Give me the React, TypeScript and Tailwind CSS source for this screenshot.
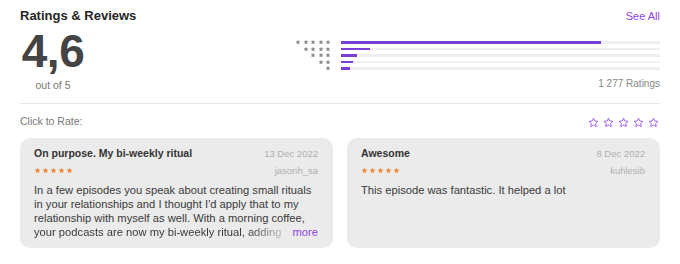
const bars = [
  { stars: 5, pct: 81.5 },
  { stars: 4, pct: 9 },
  { stars: 3, pct: 5 },
  { stars: 2, pct: 3.7 },
  { stars: 1, pct: 2.8 },
]

const reviews = [
  {
    title: 'On purpose. My bi-weekly ritual',
    date: '13 Dec 2022',
    user: 'jasonh_sa',
    lines: [
      'In a few episodes you speak about creating small rituals',
      "in your relationships and I thought I'd apply that to my",
      'relationship with myself as well. With a morning coffee,',
    ],
    last: 'your podcasts are now my bi-weekly ritual, adding',
  },
  {
    title: 'Awesome',
    date: '8 Dec 2022',
    user: 'kuhlesib',
    lines: ['This episode was fantastic. It helped a lot'],
    last: '',
  },
]

function Star({ className }: { className?: string }) {
  return (
    <svg viewBox="0 0 24 24" className={className} fill="currentColor">
      <path d="M12 2.5l2.9 6.2 6.8.8-5 4.7 1.3 6.7L12 17.6l-6 3.3 1.3-6.7-5-4.7 6.8-.8z" />
    </svg>
  )
}

function StarOutline({ className }: { className?: string }) {
  return (
    <svg viewBox="0 0 24 24" className={className} fill="none" stroke="currentColor" strokeWidth="2" strokeLinejoin="round">
      <path d="M12 2.5l2.9 6.2 6.8.8-5 4.7 1.3 6.7L12 17.6l-6 3.3 1.3-6.7-5-4.7 6.8-.8z" />
    </svg>
  )
}

export default function App() {
  return (
    <div className="w-[680px] h-[264px] bg-white px-5 pt-[7px] font-['Liberation_Sans',Arial,sans-serif] overflow-hidden">
      <div className="flex items-center justify-between h-[18px]">
        <h2 className="text-[13px] font-bold text-[#262626]">Ratings &amp; Reviews</h2>
        <span className="text-[11px] text-[#8b45e6] mt-[1px]">See All</span>
      </div>

      <div className="flex h-[79px] border-b border-[#e6e6e6]">
        <div className="w-[66px] flex flex-col items-center">
          <span className="text-[46px] leading-[44px] font-bold text-[#444] tracking-[-0.5px] mt-[4px]">4,6</span>
          <span className="text-[10.5px] text-[#777] mt-[5px]">out of 5</span>
        </div>

        <div className="flex-1 flex flex-col items-end">
          <div className="flex items-start mt-[16px] w-full justify-end">
            <div className="flex flex-col items-end mr-[10px] gap-[0.5px] -mt-[2px]">
              {bars.map((b) => (
                <div key={b.stars} className="flex gap-[1.5px] text-[#8a8a8a]">
                  {Array.from({ length: b.stars }).map((_, i) => (
                    <Star key={i} className="w-[6px] h-[6px]" />
                  ))}
                </div>
              ))}
            </div>
            <div className="w-[319px] flex flex-col gap-[4px]">
              {bars.map((b) => (
                <div key={b.stars} className="h-[2.5px] bg-[#efefef]">
                  <div className="h-full bg-[#7b3fd8]" style={{ width: `${b.pct}%` }} />
                </div>
              ))}
            </div>
          </div>
          <span className="text-[10px] text-[#888] mt-[5px]">1 277 Ratings</span>
        </div>
      </div>

      <div className="flex items-center justify-between mt-[11px] h-[14px]">
        <span className="text-[10.5px] text-[#777]">Click to Rate:</span>
        <div className="flex gap-[4px] text-[#9a55ee] mr-[1px]">
          {Array.from({ length: 5 }).map((_, i) => (
            <StarOutline key={i} className="w-[11px] h-[11px]" />
          ))}
        </div>
      </div>

      <div className="grid grid-cols-2 gap-[14px] mt-[9px]">
        {reviews.map((r) => (
          <div key={r.user} className="h-[110px] bg-[#ebebeb] rounded-[10px] pl-[14px] pr-[15px] pt-[8px]">
            <div className="flex justify-between items-baseline">
              <span className="text-[10.5px] font-bold text-[#333]">{r.title}</span>
              <span className="text-[9.5px] text-[#b0b0b0]">{r.date}</span>
            </div>
            <div className="flex justify-between items-center mt-[2px]">
              <div className="flex gap-[1px] text-[#f0893b]">
                {Array.from({ length: 5 }).map((_, i) => (
                  <Star key={i} className="w-[7px] h-[7px]" />
                ))}
              </div>
              <span className="text-[9.5px] text-[#b0b0b0]">{r.user}</span>
            </div>
            <div className="mt-[5px] text-[11.2px] leading-[14px] text-[#3a3a3a]">
              {r.lines.map((l, i) => (
                <p key={i} className="whitespace-nowrap">{l}</p>
              ))}
              {r.last && (
                <div className="flex items-center justify-between">
                  <p className="whitespace-nowrap [mask-image:linear-gradient(to_right,black_86%,rgba(0,0,0,0.25))]">{r.last}</p>
                  <span className="text-[#8b45e6]">more</span>
                </div>
              )}
            </div>
          </div>
        ))}
      </div>
    </div>
  )
}
